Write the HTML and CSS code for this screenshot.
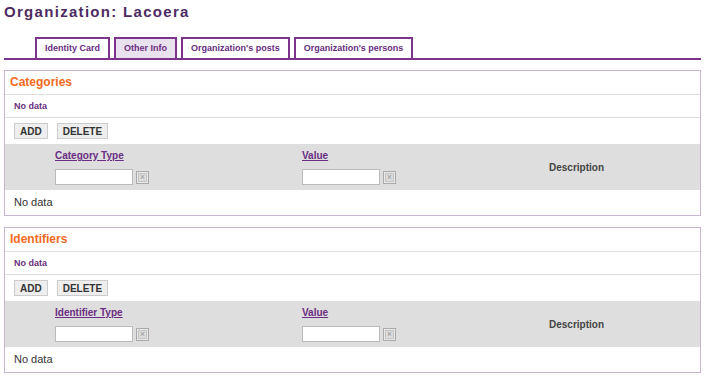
FILE: index.html
```html
<!DOCTYPE html>
<html lang="en">
<head>
    <meta charset="UTF-8">
    <title>Organization: Lacoera</title>
    <link rel="stylesheet" href="styles.css">
</head>
<body>
    <h1 class="page-title">Organization: Lacoera</h1>

    <div class="tabs">
        <a class="tab">Identity Card</a>
        <a class="tab active">Other Info</a>
        <a class="tab">Organization's posts</a>
        <a class="tab">Organization's persons</a>
    </div>

    <div class="panel">
        <div class="panel-title">Categories</div>
        <div class="panel-empty">No data</div>
        <div class="toolbar">
            <button class="btn">ADD</button>
            <button class="btn">DELETE</button>
        </div>
        <div class="grid-head">
            <div class="col">
                <a class="col-link">Category Type</a>
                <div class="filter"><input type="text" class="filter-input"><span class="clear-btn"><span class="clear-icon">&#215;</span></span></div>
            </div>
            <div class="col">
                <a class="col-link">Value</a>
                <div class="filter"><input type="text" class="filter-input"><span class="clear-btn"><span class="clear-icon">&#215;</span></span></div>
            </div>
            <div class="col col-plain">Description</div>
        </div>
        <div class="grid-empty">No data</div>
    </div>

    <div class="panel">
        <div class="panel-title">Identifiers</div>
        <div class="panel-empty">No data</div>
        <div class="toolbar">
            <button class="btn">ADD</button>
            <button class="btn">DELETE</button>
        </div>
        <div class="grid-head">
            <div class="col">
                <a class="col-link">Identifier Type</a>
                <div class="filter"><input type="text" class="filter-input"><span class="clear-btn"><span class="clear-icon">&#215;</span></span></div>
            </div>
            <div class="col">
                <a class="col-link">Value</a>
                <div class="filter"><input type="text" class="filter-input"><span class="clear-btn"><span class="clear-icon">&#215;</span></span></div>
            </div>
            <div class="col col-plain">Description</div>
        </div>
        <div class="grid-empty">No data</div>
    </div>
</body>
</html>
```

FILE: styles.css
```css
body {
    margin: 0;
    padding: 3px 13px 0 4px;
    font-family: "Liberation Sans", Arial, sans-serif;
    background: #fff;
    color: #333;
}
.page-title {
    margin: 0;
    font-size: 15px;
    line-height: 18px;
    font-weight: bold;
    letter-spacing: 1.3px;
    color: #4e2a63;
}
.tabs {
    display: flex;
    gap: 4px;
    margin-top: 16px;
    padding-left: 31px;
    border-bottom: 2px solid #7b338c;
}
.tab {
    display: block;
    height: 19px;
    line-height: 19px;
    padding: 0 8px;
    border: 2px solid #7b338c;
    border-bottom: none;
    font-size: 9px;
    font-weight: bold;
    color: #6a2d82;
    background: #fff;
}
.tab.active {
    background: #e9e1ee;
}
.panel {
    margin-top: 10px;
    border: 1px solid #c8b6d0;
}
.panel + .panel {
    margin-top: 11px;
}
.panel-title {
    height: 23px;
    line-height: 23px;
    padding-left: 5px;
    font-size: 12px;
    font-weight: bold;
    color: #f26a22;
    border-bottom: 1px solid #dedede;
}
.panel-empty {
    height: 22px;
    line-height: 22px;
    padding-left: 9px;
    font-size: 9px;
    font-weight: bold;
    color: #6a2d82;
    border-bottom: 1px solid #dedede;
}
.toolbar {
    display: flex;
    gap: 9px;
    height: 26px;
    padding: 5px 0 0 9px;
    box-sizing: border-box;
}
.btn {
    height: 16px;
    padding: 0 5px;
    font-family: "Liberation Sans", Arial, sans-serif;
    font-size: 10px;
    font-weight: bold;
    color: #333;
    background: #eee;
    border: 1px solid #ccc;
}
.grid-head {
    display: grid;
    grid-template-columns: 247px 247px 1fr;
    height: 46px;
    padding-left: 50px;
    background: #dedede;
}
.col {
    padding-top: 5px;
}
.col-link {
    display: block;
    font-size: 10px;
    font-weight: bold;
    color: #6a2d82;
    text-decoration: underline;
    line-height: 13px;
}
.filter {
    display: flex;
    align-items: center;
    gap: 3px;
    margin-top: 7px;
}
.filter-input {
    width: 78px;
    height: 16px;
    box-sizing: border-box;
    margin: 0;
    border: 1px solid #bbb;
    background: #fff;
}
.clear-btn {
    width: 13px;
    height: 13px;
    box-sizing: border-box;
    border: 1px solid #aaa;
    background: #e8e8e8;
    display: flex;
    align-items: center;
    justify-content: center;
}
.clear-icon {
    width: 7px;
    height: 7px;
    border: 1px solid #c4c4c4;
    font-size: 9px;
    line-height: 7px;
    text-align: center;
    color: #999;
    background: #ddd;
}
.col-plain {
    display: flex;
    align-items: center;
    padding-top: 0;
    font-size: 10px;
    font-weight: bold;
    color: #444;
}
.grid-empty {
    height: 25px;
    line-height: 24px;
    padding-left: 9px;
    font-size: 11px;
    color: #333;
}
```
